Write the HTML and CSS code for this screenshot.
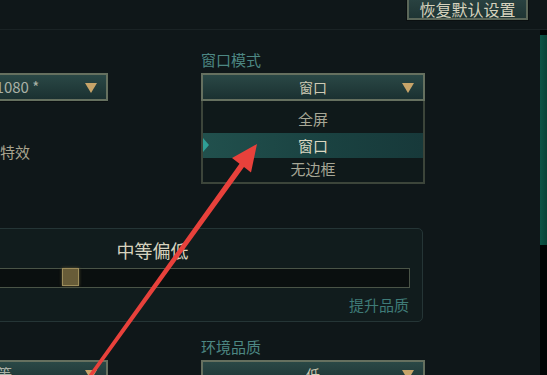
FILE: index.html
```html
<!DOCTYPE html>
<html lang="zh">
<head>
<meta charset="utf-8">
<title>设置</title>
<link rel="stylesheet" href="styles.css">
</head>
<body>
<div class="screen">
  <header class="topbar">
    <button class="reset-btn">恢复默认设置</button>
  </header>
  <div class="body-row">
    <main class="main">
      <div class="content">
        <div class="grid-row">
          <div class="field">
            <div class="label"></div>
            <div class="select select-left"><span class="select-text">1920x1080 *</span><span class="caret"></span></div>
          </div>
          <div class="field">
            <div class="label">窗口模式</div>
            <div class="select-wrap">
              <div class="select"><span class="select-text">窗口</span><span class="caret"></span></div>
              <ul class="menu">
                <li class="menu-item">全屏</li>
                <li class="menu-item active"><span class="marker"></span>窗口</li>
                <li class="menu-item">无边框</li>
              </ul>
            </div>
          </div>
        </div>

        <div class="option-row">特效</div>

        <section class="quality-panel">
          <div class="quality-title">中等偏低</div>
          <div class="track">
            <span class="thumb" style="left: 166px"></span>
          </div>
          <div class="quality-hint">提升品质</div>
        </section>

        <div class="grid-row bottom-row">
          <div class="field">
            <div class="label"></div>
            <div class="select select-left"><span class="select-text">中等</span><span class="caret"></span></div>
          </div>
          <div class="field">
            <div class="label">环境品质</div>
            <div class="select"><span class="select-text">低</span><span class="caret"></span></div>
          </div>
        </div>
      </div>
    </main>
    <aside class="scrollbar"><span class="scroll-thumb"></span></aside>
  </div>

  <svg class="annotation" width="547" height="375" viewBox="0 0 547 375">
    <polygon fill="#e8413b" points="257,144 251,172.5 244,167 91,378 88,376 239.5,163.8 232,158"/>
  </svg>
</div>
</body>
</html>
```
FILE: styles.css
```css
* { box-sizing: border-box; }

html, body {
  margin: 0;
  padding: 0;
}

body {
  width: 547px;
  height: 375px;
  overflow: hidden;
  background: #0f1719;
  font-family: "Noto Sans CJK SC", "Noto Sans", sans-serif;
}

.screen {
  position: relative;
  width: 547px;
  height: 375px;
  overflow: hidden;
  display: flex;
  flex-direction: column;
}

.topbar {
  height: 30px;
  flex: none;
  border-bottom: 1px solid #1a2325;
  display: flex;
  justify-content: flex-end;
  align-items: flex-end;
  padding-right: 19px;
  padding-bottom: 9px;
}

.reset-btn {
  width: 121px;
  height: 34px;
  margin: 0;
  padding: 11px 0 0;
  border: 2px solid #5b6759;
  background: linear-gradient(#2f4a49, #1f3534);
  color: #d6d2bd;
  font-family: inherit;
  font-size: 16px;
  line-height: 18px;
  text-align: center;
  box-shadow: 0 0 0 1px #0a0f10;
}

.body-row {
  flex: 1;
  display: flex;
  min-height: 0;
}

.main {
  width: 540px;
  flex: none;
  overflow: hidden;
}

.scrollbar {
  width: 7px;
  flex: none;
  background: #020404;
  display: flex;
  flex-direction: column;
}

.scroll-thumb {
  display: block;
  margin-top: 5px;
  height: 210px;
  background: linear-gradient(90deg, #0d5446, #0a4237);
}

.content {
  margin-left: -116px;
  padding-top: 21px;
  width: 541px;
  display: flex;
  flex-direction: column;
}

.grid-row {
  display: grid;
  grid-template-columns: 224px 224px;
  column-gap: 93px;
}

.field {
  display: flex;
  flex-direction: column;
  gap: 4px;
}

.label {
  height: 18px;
  font-size: 15px;
  line-height: 18px;
  color: #4d8783;
}

.select-wrap {
  position: relative;
}

.select {
  height: 28px;
  border: 2px solid #65705f;
  background: linear-gradient(#2a4846, #1b3131);
  display: flex;
  align-items: center;
  justify-content: center;
  position: relative;
  box-shadow: 0 1px 0 #0a0f10;
}

.select-text {
  font-size: 14px;
  line-height: 18px;
  color: #cfcab4;
}

.select-left {
  padding-left: 2px;
}

.select-left .select-text {
  font-size: 15px;
  color: #aab1a6;
}

.caret {
  position: absolute;
  right: 9px;
  top: 8px;
  width: 0;
  height: 0;
  border-left: 6px solid transparent;
  border-right: 6px solid transparent;
  border-top: 10px solid #c7a469;
}

.menu {
  position: absolute;
  left: 0;
  right: 0;
  top: 100%;
  margin: 0;
  padding: 5px 0 0;
  list-style: none;
  height: 83px;
  border: 2px solid #3c453a;
  border-top: none;
  background: #0f191a;
  z-index: 2;
}

.menu-item {
  position: relative;
  height: 25px;
  font-size: 15px;
  line-height: 25px;
  text-align: center;
  color: #a7a796;
}

.menu-item.active {
  margin-top: 2px;
  margin-bottom: -2px;
  background: linear-gradient(90deg, #21504d, #1a4241 55%, #17393a);
  color: #dcd8c2;
}

.marker {
  position: absolute;
  left: 0;
  top: 5px;
  width: 0;
  height: 0;
  border-top: 7px solid transparent;
  border-bottom: 7px solid transparent;
  border-left: 6px solid #2f9f96;
}

.option-row {
  margin-top: 41px;
  padding-left: 116px;
  font-size: 15px;
  line-height: 20px;
  color: #a8a48f;
}

.quality-panel {
  margin: 66px 2px 0 -2px;
  height: 94px;
  border: 1px solid #253536;
  border-radius: 5px;
  background: #111c1d;
  padding: 10px 12px 0;
  display: flex;
  flex-direction: column;
}

.quality-title {
  text-align: center;
  font-size: 18px;
  line-height: 22px;
  color: #d7d3bf;
}

.track {
  position: relative;
  margin-top: 7px;
  height: 20px;
  border: 1px solid #4a5447;
  background: #0a0f0f;
}

.thumb {
  position: absolute;
  top: -1px;
  width: 17px;
  height: 18px;
  border: 1px solid #9d8d5b;
  background: #685c38;
  box-shadow: 0 0 3px #5d5232;
}

.quality-hint {
  margin-top: 7px;
  text-align: right;
  font-size: 15px;
  line-height: 20px;
  color: #3f7b77;
  padding-right: 1px;
}

.bottom-row {
  margin-top: 16px;
}

.annotation {
  position: absolute;
  left: 0;
  top: 0;
  z-index: 5;
  pointer-events: none;
}
```
